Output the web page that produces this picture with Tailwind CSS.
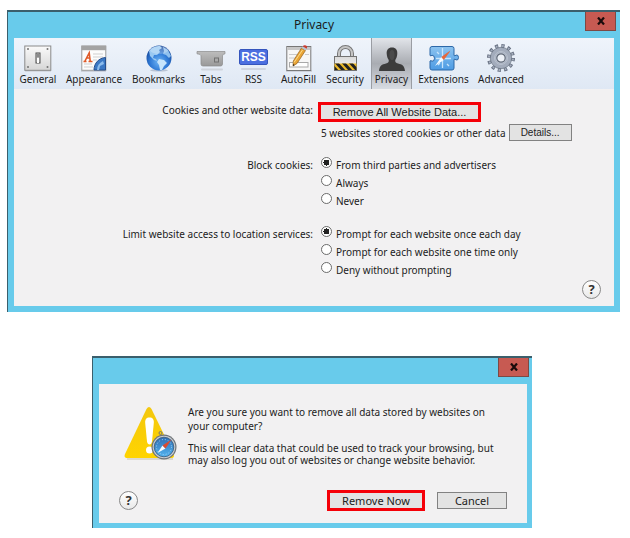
<!DOCTYPE html>
<html lang="en">
<head>
<meta charset="UTF-8">
<meta name="viewport" content="width=device-width, initial-scale=1.0">
<title>Privacy</title>
<script src="https://cdn.jsdelivr.net/npm/@tailwindcss/browser@4"></script>
</head>
<body class="bg-white pt-[10px] pr-[10px] pl-[7px] font-['Noto_Sans','Open_Sans',sans-serif] text-[10px] leading-[14px] text-[#1c1c1c]">

<!-- Privacy preferences -->
<main class="border-t-2 border-l border-[#3b5f6c] bg-[#68cbeb] px-[6px] pb-[6px]">
    <header class="relative flex h-[26px] items-center justify-center">
        <h1 class="text-[12px] leading-4">Privacy</h1>
        <button type="button" aria-label="Close" class="absolute top-0 right-[-2px] flex h-[19px] w-[31px] items-center justify-center border border-t-0 border-[#7d4944] bg-[#c75a52]">
            <svg class="h-2 w-2" viewBox="0 0 8 8"><path d="M1 0.5L7 7.5M7 0.5L1 7.5" stroke="#1b0b0b" stroke-width="2.2"/></svg>
        </button>
    </header>

    <div class="bg-[#f2f1f2] pb-[7px]">
        <!-- toolbar -->
        <nav class="flex h-[51px] bg-linear-to-b from-[#eff4fb] to-[#dfe8f4] pl-px">
            <button type="button" class="flex w-[46px] flex-col items-center pt-[6px]">
                <svg class="h-7 w-7" viewBox="0 0 28 28">
                    <defs><linearGradient id="plate" x2="0" y2="1"><stop stop-color="#fafafa"/><stop offset="1" stop-color="#d6d6d6"/></linearGradient></defs>
                    <rect x="1" y="26" width="26" height="1.5" fill="#c3c8d0"/>
                    <rect x=".8" y="2" width="26" height="24.3" fill="url(#plate)" stroke="#8a8a8a"/>
                    <g fill="#747474"><circle cx="4" cy="5" r="1"/><circle cx="23.5" cy="5" r="1"/><circle cx="4" cy="23" r="1"/><circle cx="23.5" cy="23" r="1"/></g>
                    <rect x="12" y="9" width="4" height="10" fill="#d9d9d9" stroke="#4b4b4b"/>
                    <rect x="13" y="14" width="2" height="5" fill="#fff"/>
                    <path d="M12.5 9.500h3v4h-3z" fill="#8b8b8b"/>
                </svg>
                <span>General</span>
            </button>
            <button type="button" class="flex w-[66px] flex-col items-center pt-[6px]">
                <svg class="h-7 w-7" viewBox="0 0 28 28">
                    <path d="M1 26.5h25v1.2H1z" fill="#c3c8d0"/>
                    <rect x="1.8" y="2" width="24" height="24.3" fill="#fcfcfc" stroke="#999"/>
                    <path d="M1.5 1.8h24.6v4.4H1.5z" fill="#a3a3a3"/>
                    <path d="M13 10h10M13 13h10M13 16h4M4 20h8M4 23h9" stroke="#cfcfcf"/>
                    <path d="M3.5 17.5h3M5 17L9.2 9l1 8M8.5 17.5h4M6.7 14h3.5" fill="none" stroke="#e05a28" stroke-width="1.6"/>
                    <path d="M14 26c0-7 5-12 11.5-12.5V26z" fill="#3b78c4" stroke="#264f8e"/>
                    <path d="M17 26c0-4 2-7 6-9l1 3-4 2-1 4z" fill="#8dbcec"/>
                </svg>
                <span>Appearance</span>
            </button>
            <button type="button" class="flex w-[63px] flex-col items-center pt-[6px]">
                <svg class="h-7 w-7" viewBox="0 0 28 28">
                    <defs><radialGradient id="globe" cx=".5" cy=".65" r=".6"><stop stop-color="#6fb5f5"/><stop offset=".6" stop-color="#2f7ad6"/><stop offset="1" stop-color="#174a9d"/></radialGradient></defs>
                    <ellipse cx="14" cy="26.3" rx="9" ry="1.3" fill="#b9c3d3"/>
                    <circle cx="14" cy="14" r="12.5" fill="url(#globe)"/>
                    <path d="M4 7c3-4 7-5 11-5l2 2-3 2 1 2-3 3-3 0-1 3 3 1 1 2-3-1-4-4z" fill="#98c8f2"/>
                    <path d="M18 3l5 3 3 6-2 2-3-3-3-1 1-3z" fill="#8fc0ee"/>
                    <path d="M14 15l5 1 3 3-3 3-2 4-2 0-1-5-2-3z" fill="#c5e4fc"/>
                    <ellipse cx="14" cy="6" rx="9" ry="4" fill="#fff" opacity=".25"/>
                </svg>
                <span>Bookmarks</span>
            </button>
            <button type="button" class="flex w-[42px] flex-col items-center pt-[6px]">
                <svg class="h-7 w-[30px]" viewBox="0 0 30 28">
                    <defs><linearGradient id="tab" x2="0" y2="1"><stop stop-color="#bdbdbd"/><stop offset="1" stop-color="#999"/></linearGradient></defs>
                    <rect x="5" y="24.5" width="22" height="2" rx="1" fill="#cfd4dc"/>
                    <path d="M1 7.5h28v2.3q-2.5.2-2.5 2V20q0 2-2 2H7q-2 0-2-2v-8.200q0-1.800-4-2z" fill="url(#tab)" stroke="#8b8b8b" stroke-width=".7"/>
                    <rect x="18.500" y="14" width="4" height="4" fill="#aaa" stroke="#717171"/>
                </svg>
                <span>Tabs</span>
            </button>
            <button type="button" class="flex w-[43px] flex-col items-center pt-[6px]">
                <span class="flex h-7 flex-col items-center pt-[5px]">
                    <span class="flex h-4 w-[29px] items-center justify-center rounded-[2px] border border-[#3555bd] bg-[#4b6fe0] font-['Liberation_Sans',sans-serif] text-[12px] leading-none font-bold text-white">RSS</span>
                    <span class="mt-[3px] h-[2px] w-[25px] rounded-full bg-[#cfd5e0]"></span>
                </span>
                <span>RSS</span>
            </button>
            <button type="button" class="flex w-[47px] flex-col items-center pt-[6px]">
                <svg class="h-7 w-7" viewBox="0 0 28 28">
                    <path d="M1 26.5h26v1.200H1z" fill="#c3c8d0"/>
                    <rect x="1.800" y="2.500" width="24" height="24" fill="#f7f7f7" stroke="#777"/>
                    <path d="M2.300 3h23v3h-23z" fill="#c7c7c7"/>
                    <path d="M4 10.500h8M20 10.500h4M4 14h6" stroke="#cacaca"/>
                    <rect x="4.500" y="18.500" width="18.500" height="4.500" fill="#fff" stroke="#a9a9a9"/>
                    <path d="M16.500 4l4 2.500-8.500 13-4 2.500.300-5z" fill="#e9a435" stroke="#94601c" stroke-width=".7"/>
                    <path d="M17.500 6L9 18.500" stroke="#fbdc8b"/>
                    <path d="M16.500 4l1.200-1.700 4 2.500-1.200 1.700z" fill="#b9c2cd"/>
                    <path d="M17.700 2.300q1.500-1.800 3.400-.7t.6 3.200z" fill="#cb3a2d"/>
                    <path d="M8 22l.1-2 1.500.9z" fill="#222"/>
                </svg>
                <span>AutoFill</span>
            </button>
            <button type="button" class="flex w-[46px] flex-col items-center pt-[6px]">
                <svg class="h-7 w-7" viewBox="0 0 28 28">
                    <defs>
                        <linearGradient id="lock" x2="0" y2="1"><stop stop-color="#d9d9d9"/><stop offset="1" stop-color="#f8f8f8"/></linearGradient>
                        <clipPath id="lockBase"><path d="M3.500 19.500h22V26h-22z"/></clipPath>
                    </defs>
                    <path d="M8 13V9.500a6.500 6.500 0 0 1 13 0V13" fill="none" stroke="#777" stroke-width="4"/>
                    <path d="M8 13V9.500a6.500 6.500 0 0 1 13 0V13" fill="none" stroke="#c5c5c5" stroke-width="2"/>
                    <rect x="3.500" y="12.500" width="22" height="14" fill="url(#lock)" stroke="#737373"/>
                    <path d="M3.500 19.500h22V26h-22z" fill="#ebb927"/>
                    <path clip-path="url(#lockBase)" d="M-4 16l10 11M3 16l10 11M10 16l10 11M17 16l10 11" stroke="#222" stroke-width="3"/>
                </svg>
                <span>Security</span>
            </button>
            <button type="button" aria-current="page" class="mx-[3px] flex w-[41px] flex-col items-center border-x border-[#9a9da3] bg-linear-to-b from-[#e2e5ea] via-[#a9acb2] to-[#d8dce3] pt-[6px]">
                <svg class="h-7 w-7" viewBox="0 0 28 28">
                    <path d="M14 3.500c3.800 0 5.600 2.600 5.300 6.200-.2 3-1 4.800-2 6.200-.4 2 .5 3 2.700 3.600 4 1 6.600 2 7 7.500H1c.4-5.500 3-6.500 7-7.500 2.200-.6 3.100-1.600 2.700-3.600-1-1.400-1.800-3.200-2-6.200-.3-3.600 1.500-6.200 5.300-6.200z" fill="#3c3c3c"/>
                    <ellipse cx="14" cy="11" rx="2.500" ry="5" fill="#555" opacity=".6"/>
                </svg>
                <span>Privacy</span>
            </button>
            <button type="button" class="flex w-[57px] flex-col items-center pt-[6px]">
                <svg class="h-7 w-[30px]" viewBox="0 0 30 28">
                    <defs><linearGradient id="puzzle" x2="0" y2="1"><stop stop-color="#8cc3ef"/><stop offset="1" stop-color="#4c9be4"/></linearGradient></defs>
                    <path d="M3 2.500h20q2 0 2 2v7q1 1 2-.5 2.500-.5 2.500 2.500t-2.500 2.500q-1-1.500-2-.5v8.500q0 2-2 2H3q-2 0-2-2V17q1-1 2 .3 2.500 0 2.500-3T3 11.200q-1 1.300-2 .3v-7q0-2 2-2z" fill="url(#puzzle)" stroke="#2c68a8"/>
                    <path d="M13.500 4v20M7 14.500h15M8 8l2 2M18 20l2 2M9 21l2-2" stroke="#c9e5fb" stroke-width="1.300"/>
                    <path d="M12.300 13l2.500 3L6 22z" fill="#f4faff"/>
                    <path d="M12.300 13l2.500 3 5.500-7.500 1-2z" fill="#e7683a"/>
                </svg>
                <span>Extensions</span>
            </button>
            <button type="button" class="flex w-[58px] flex-col items-center pt-[6px]">
                <svg class="h-7 w-7" viewBox="0 0 28 28">
                    <circle cx="14" cy="14" r="12" fill="none" stroke="#697283" stroke-width="4" stroke-dasharray="3.140 3.143"/>
                    <circle cx="14" cy="14" r="12" fill="none" stroke="#a7b0c0" stroke-width="2" stroke-dasharray="1.600 4.683" stroke-dashoffset="-.8"/>
                    <circle cx="14" cy="14" r="8" fill="#c2cad7" stroke="#a3acbc" stroke-width="5"/>
                    <circle cx="14" cy="14" r="10.700" fill="none" stroke="#6f7887" stroke-width=".8"/>
                    <circle cx="14" cy="14" r="4.200" fill="#edf1f7" stroke="#5f6876" stroke-width="1.200"/>
                    <circle cx="14" cy="14" r="6.500" fill="none" stroke="#b9c1ce"/>
                </svg>
                <span>Advanced</span>
            </button>
        </nav>

        <!-- settings -->
        <form class="grid grid-cols-2 gap-x-2 pt-[13px] pl-[6px]">
            <p class="pt-px text-right">Cookies and other website data:</p>
            <div>
                <button type="button" class="-ml-[3px] block h-5 w-[163px] border-3 border-[#f50008] bg-[#e3e3e3] font-['Liberation_Sans',sans-serif] text-[11px] leading-[14px]">Remove All Website Data...</button>
                <div class="mt-[2px] flex items-center gap-[3px] whitespace-nowrap">
                    <span>5 websites stored cookies or other data</span>
                    <button type="button" class="h-[17px] w-[63px] border border-[#828282] bg-[#e3e3e3] font-['Liberation_Sans',sans-serif] leading-[14px]">Details...</button>
                </div>
            </div>

            <p id="block-label" class="mt-4 pt-px text-right">Block cookies:</p>
            <div role="radiogroup" aria-labelledby="block-label" class="mt-4 leading-4 whitespace-nowrap">
                <label class="flex h-[18px] items-start gap-1"><input type="radio" name="block" checked class="h-[11px] w-[11px] appearance-none rounded-full border border-[#6b6b6b] bg-white checked:bg-[radial-gradient(circle,#222_3px,#fff_3px)]">From third parties and advertisers</label>
                <label class="flex h-[18px] items-start gap-1"><input type="radio" name="block" class="h-[11px] w-[11px] appearance-none rounded-full border border-[#6b6b6b] bg-white checked:bg-[radial-gradient(circle,#222_3px,#fff_3px)]">Always</label>
                <label class="flex h-[18px] items-start gap-1"><input type="radio" name="block" class="h-[11px] w-[11px] appearance-none rounded-full border border-[#6b6b6b] bg-white checked:bg-[radial-gradient(circle,#222_3px,#fff_3px)]">Never</label>
            </div>

            <p id="limit-label" class="mt-[15px] pt-px text-right">Limit website access to location services:</p>
            <div role="radiogroup" aria-labelledby="limit-label" class="mt-[15px] leading-4 whitespace-nowrap">
                <label class="flex h-[18px] items-start gap-1"><input type="radio" name="limit" checked class="h-[11px] w-[11px] appearance-none rounded-full border border-[#6b6b6b] bg-white checked:bg-[radial-gradient(circle,#222_3px,#fff_3px)]">Prompt for each website once each day</label>
                <label class="flex h-[18px] items-start gap-1"><input type="radio" name="limit" class="h-[11px] w-[11px] appearance-none rounded-full border border-[#6b6b6b] bg-white checked:bg-[radial-gradient(circle,#222_3px,#fff_3px)]">Prompt for each website one time only</label>
                <label class="flex h-[18px] items-start gap-1"><input type="radio" name="limit" class="h-[11px] w-[11px] appearance-none rounded-full border border-[#6b6b6b] bg-white checked:bg-[radial-gradient(circle,#222_3px,#fff_3px)]">Deny without prompting</label>
            </div>
        </form>
        <div class="flex justify-end pr-[13px]">
            <button type="button" class="h-[19px] w-[19px] rounded-full border border-[#888] bg-linear-to-b from-white to-[#e9e9e9] text-[13px] leading-[17px] font-bold text-[#333]">?</button>
        </div>
    </div>
</main>

<!-- confirmation -->
<div class="flex justify-center pt-11 pr-[3px]">
    <section role="alertdialog" aria-label="Remove website data" class="w-[440px] border-t-2 border-l border-[#3b5f6c] bg-[#68cbeb] pr-[5px] pb-[5px] pl-[6px]">
        <header class="flex h-[26px] items-start justify-end">
            <button type="button" aria-label="Close" class="-mr-[2px] flex h-[19px] w-[31px] items-center justify-center border border-t-0 border-[#7d4944] bg-[#c75a52]">
                <svg class="h-2 w-2" viewBox="0 0 8 8"><path d="M1 0.5L7 7.5M7 0.5L1 7.5" stroke="#1b0b0b" stroke-width="2.2"/></svg>
            </button>
        </header>
        <div class="bg-[#f2f1f2] px-5 pt-[21px] pb-3">
            <div class="flex">
                <svg class="ml-[5px] h-[56px] w-[54px] shrink-0" viewBox="0 0 54 56">
                    <defs>
                        <linearGradient id="warn" x2="0" y2="1"><stop stop-color="#f3c70f"/><stop offset="1" stop-color="#ffd400"/></linearGradient>
                        <linearGradient id="dial" x2="0" y2="1"><stop stop-color="#2f6db3"/><stop offset="1" stop-color="#53b4ef"/></linearGradient>
                    </defs>
                    <path d="M3 54h46" stroke="#dcd9d0" stroke-width="2"/>
                    <path d="M22.500 4q2.500-4 5 0l22 45q1.500 4-2.500 4H3.500Q-.5 53 1 49z" fill="url(#warn)"/>
                    <path d="M25.500 12.500c3.200 0 4.600 2 4.300 5.500L28 36.500q-.5 3-2.500 3t-2.500-3L21.200 18c-.3-3.500 1.100-5.500 4.300-5.500z" fill="#fff"/>
                    <circle cx="25.500" cy="45" r="3.500" fill="#fff"/>
                    <circle cx="36.500" cy="28" r="1.500" fill="none" stroke="#777"/>
                    <circle cx="40" cy="42" r="12.500" fill="#6e7378"/>
                    <circle cx="40" cy="42" r="11.300" fill="#c8cdd1"/>
                    <circle cx="40" cy="42" r="9.800" fill="url(#dial)" stroke="#355778" stroke-width=".8"/>
                    <circle cx="40" cy="42" r="7.500" fill="none" stroke="#a5d2f2" stroke-width="1" stroke-dasharray="1 2"/>
                    <path d="M38.500 40.500l3 3-8 4.500z" fill="#f7fbff"/>
                    <path d="M38.500 40.500l3 3 6-9z" fill="#d94b31"/>
                </svg>
                <div class="pl-[10px]">
                    <p>Are you sure you want to remove all data stored by websites on<br>your computer?</p>
                    <p class="mt-[9px] leading-3">This will clear data that could be used to track your browsing, but<br>may also log you out of websites or change website behavior.</p>
                </div>
            </div>
            <div class="mt-6 flex items-center">
                <button type="button" class="h-[19px] w-[19px] rounded-full border border-[#888] bg-linear-to-b from-white to-[#e9e9e9] text-[13px] leading-[17px] font-bold text-[#333]">?</button>
                <button type="button" class="ml-auto h-[21px] w-[98px] border-3 border-[#f50008] bg-[#e3e3e3] text-[11px] leading-[15px]">Remove Now</button>
                <button type="button" class="ml-3 h-[17px] w-[70px] border border-[#828282] bg-[#e3e3e3] text-[11px] leading-[14px]">Cancel</button>
            </div>
        </div>
    </section>
</div>

</body>
</html>
